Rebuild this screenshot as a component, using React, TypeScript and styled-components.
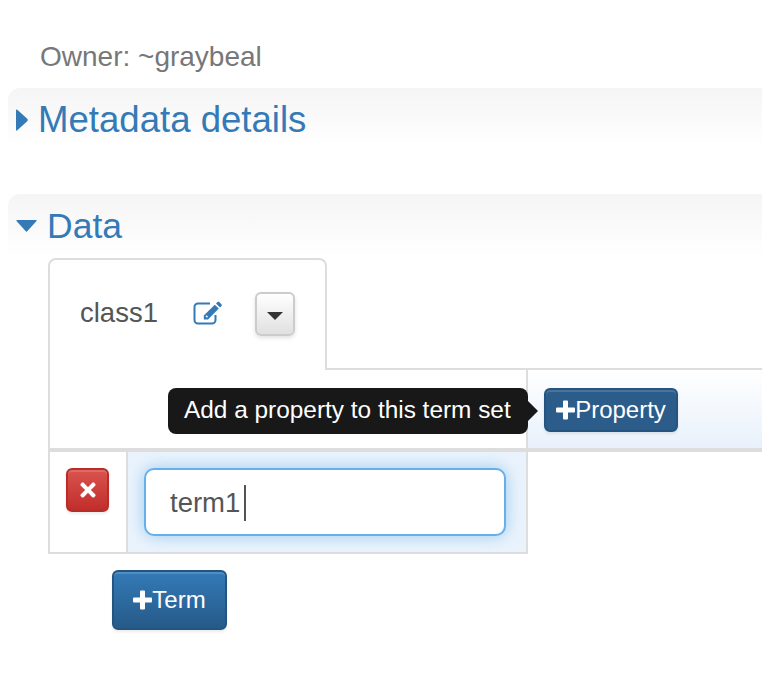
import React from "react";
import styled, { createGlobalStyle } from "styled-components";
import { FaTimes } from "react-icons/fa";

const GlobalStyle = createGlobalStyle`
  html, body {
    margin: 0;
    padding: 0;
    background: #fff;
    overflow: hidden;
  }
  body {
    font-family: "Liberation Sans", Arial, sans-serif;
    color: #555;
  }
`;

const Page = styled.div`
  width: 762px;
  height: 684px;
  padding-top: 40px;
  box-sizing: border-box;
  overflow: hidden;
`;

const Owner = styled.div`
  margin-left: 40px;
  height: 48px;
  line-height: 34px;
  font-size: 28px;
  color: #777;
`;

const SectionHeader = styled.div<{ $height: number; $gap: number; $nudge: number }>`
  display: flex;
  align-items: center;
  gap: 10px;
  margin-left: 8px;
  height: ${(p) => p.$height}px;
  margin-bottom: ${(p) => p.$gap}px;
  padding: ${(p) => p.$nudge}px 0 0 8px;
  box-sizing: border-box;
  border-radius: 12px 0 0 0;
  background: linear-gradient(to bottom, #f5f5f5, #ffffff);
`;

const SectionTitle = styled.span<{ $size: number }>`
  font-size: ${(p) => p.$size}px;
  line-height: 40px;
  color: #337ab7;
`;

const TabStrip = styled.div`
  display: flex;
  margin-left: 48px;
  height: 112px;
`;

const Tab = styled.div`
  display: flex;
  align-items: flex-start;
  width: 279px;
  box-sizing: border-box;
  padding: 32px 0 0 30px;
  border: 2px solid #ddd;
  border-bottom: none;
  border-radius: 8px 8px 0 0;
`;

const TabName = styled.span`
  font-size: 27.5px;
  line-height: 40px;
  margin-top: 1px;
  color: #555;
`;

const EditIcon = styled.svg`
  width: 30px;
  height: 24px;
  flex: none;
  margin: 9px 0 0 35px;
`;

const CaretButton = styled.div`
  display: flex;
  align-items: center;
  justify-content: center;
  width: 40px;
  height: 44px;
  margin-left: 32px;
  box-sizing: border-box;
  border: 2px solid #ccc;
  border-radius: 6px;
  background: linear-gradient(to bottom, #ffffff, #e0e0e0);
  box-shadow: 0 2px 4px rgba(0, 0, 0, 0.12);
`;

const Caret = styled.span`
  width: 0;
  height: 0;
  margin-top: 4px;
  border-left: 8px solid transparent;
  border-right: 8px solid transparent;
  border-top: 8px solid #333;
`;

const TabFiller = styled.div`
  flex: 1;
  border-bottom: 2px solid #ddd;
`;

const HeaderRow = styled.div`
  display: flex;
  margin-left: 48px;
  height: 82px;
  box-sizing: border-box;
  border-left: 2px solid #ddd;
  border-bottom: 4px solid #ddd;
`;

const HeaderLabelCell = styled.div`
  width: 476px;
  border-right: 2px solid #ddd;
`;

const HeaderPropertyCell = styled.div`
  position: relative;
  flex: 1;
  padding: 18px 0 0 16px;
  background: linear-gradient(to bottom, #ffffff, #e8f1fb);
`;

const Tooltip = styled.div`
  position: absolute;
  top: 18px;
  right: 100%;
  width: 360px;
  height: 46px;
  box-sizing: border-box;
  padding-left: 16px;
  line-height: 44px;
  font-size: 24.4px;
  white-space: nowrap;
  color: #fff;
  background: #181818;
  border-radius: 8px;
  &::after {
    content: "";
    position: absolute;
    left: 100%;
    top: 13px;
    border-top: 10px solid transparent;
    border-bottom: 10px solid transparent;
    border-left: 10px solid #181818;
  }
`;

const BlueButton = styled.div<{ $flat?: boolean; $width: number; $height: number }>`
  display: flex;
  align-items: center;
  justify-content: center;
  width: ${(p) => p.$width}px;
  height: ${(p) => p.$height}px;
  box-sizing: border-box;
  font-size: 24px;
  color: #fff;
  border: 2px solid #245580;
  border-radius: 6px;
  background: ${(p) =>
    p.$flat ? "#2b5c8a" : "linear-gradient(to bottom, #337ab7, #265a88)"};
  box-shadow: inset 0 2px 0 rgba(255, 255, 255, 0.15), 0 2px 3px rgba(0, 0, 0, 0.08);
`;

const PlusIcon = styled.svg`
  width: 19px;
  height: 20px;
  flex: none;
  fill: #fff;
`;

const TermRow = styled.div`
  display: flex;
  margin-left: 48px;
  width: 480px;
  height: 102px;
  box-sizing: border-box;
  border: 2px solid #ddd;
  border-top: none;
`;

const RemoveCell = styled.div`
  width: 78px;
  flex: none;
  box-sizing: border-box;
  padding: 16px 0 0 16px;
  border-right: 2px solid #ddd;
`;

const RemoveButton = styled.div`
  display: flex;
  align-items: center;
  justify-content: center;
  width: 43px;
  height: 44px;
  box-sizing: border-box;
  font-size: 22px;
  color: #fff;
  border: 2px solid #b92c28;
  border-radius: 6px;
  background: linear-gradient(to bottom, #d9534f, #c12e2a);
  box-shadow: inset 0 2px 0 rgba(255, 255, 255, 0.15), 0 2px 3px rgba(0, 0, 0, 0.08);
`;

const TermCell = styled.div`
  flex: 1;
  overflow: hidden;
  padding: 16px 20px 0 16px;
  background: #eaf3fc;
`;

const TermInput = styled.div`
  display: flex;
  align-items: center;
  height: 68px;
  box-sizing: border-box;
  padding: 2px 0 0 24px;
  font-size: 27.5px;
  color: #555;
  background: #fff;
  border: 2px solid #66afe9;
  border-radius: 10px;
  box-shadow: 0 0 16px rgba(102, 175, 233, 0.6);
`;

const TextCaret = styled.span`
  width: 2px;
  height: 36px;
  margin-left: 4px;
  background: #555;
`;

const AddTermRow = styled.div`
  margin: 16px 0 0 112px;
`;

const Triangle = styled.svg<{ $width: number; $height: number }>`
  width: ${(p) => p.$width}px;
  height: ${(p) => p.$height}px;
  flex: none;
  fill: #337ab7;
`;

const Plus = () => (
  <PlusIcon viewBox="0 0 19 20">
    <path d="M7 1.5a1 1 0 0 1 1-1h3a1 1 0 0 1 1 1V7.5h6a1 1 0 0 1 1 1v3a1 1 0 0 1-1 1h-6v6a1 1 0 0 1-1 1H8a1 1 0 0 1-1-1v-6H1a1 1 0 0 1-1-1v-3a1 1 0 0 1 1-1h6z" />
  </PlusIcon>
);

const PencilSquare = () => (
  <EditIcon viewBox="0 0 30 24">
    <path
      d="M17 2.500H5A3.500 3.500 0 0 0 1.500 6v13A3.500 3.500 0 0 0 5 22.500h14a3.500 3.500 0 0 0 3.500-3.500V14"
      fill="none"
      stroke="#337ab7"
      strokeWidth="2"
    />
    <path
      d="M24.500 1a1.200 1.200 0 0 1 1.700 0l2.300 2.200a1.200 1.200 0 0 1 0 1.700L27 6.400 23 2.500zM21.800 3.700l4 3.900L15 18.500H10.800v-4z"
      fill="#337ab7"
    />
    <path d="M13 14.800l1.500 1.500" stroke="#fff" strokeWidth="1.400" />
  </EditIcon>
);

const App = () => {
  return (
    <Page>
      <GlobalStyle />
      <Owner>Owner: ~graybeal</Owner>

      <SectionHeader $height={60} $gap={46} $nudge={4}>
        <Triangle $width={12} $height={22} viewBox="0 0 12 22">
          <path d="M1 0.5 L11.5 10 Q12 11 11.5 12 L1 21.5 Q0 22 0 20.5 V1.5 Q0 0 1 0.5z" />
        </Triangle>
        <SectionTitle $size={36.6}>Metadata details</SectionTitle>
      </SectionHeader>

      <SectionHeader $height={64} $gap={0} $nudge={0}>
        <Triangle $width={21} $height={12} viewBox="0 0 21 12">
          <path d="M1 0 H20 Q21 0 20.5 1 L11 11.5 Q10.5 12 10 11.5 L0.5 1 Q0 0 1 0z" />
        </Triangle>
        <SectionTitle $size={35.5}>Data</SectionTitle>
      </SectionHeader>

      <TabStrip>
        <Tab>
          <TabName>class1</TabName>
          <PencilSquare />
          <CaretButton>
            <Caret />
          </CaretButton>
        </Tab>
        <TabFiller />
      </TabStrip>

      <HeaderRow>
        <HeaderLabelCell />
        <HeaderPropertyCell>
          <Tooltip>Add a property to this term set</Tooltip>
          <BlueButton $flat $width={134} $height={44}>
            <Plus />
            Property
          </BlueButton>
        </HeaderPropertyCell>
      </HeaderRow>

      <TermRow>
        <RemoveCell>
          <RemoveButton>
            <FaTimes />
          </RemoveButton>
        </RemoveCell>
        <TermCell>
          <TermInput>
            term1
            <TextCaret />
          </TermInput>
        </TermCell>
      </TermRow>

      <AddTermRow>
        <BlueButton $width={115} $height={60}>
          <Plus />
          Term
        </BlueButton>
      </AddTermRow>
    </Page>
  );
};

export default App;
